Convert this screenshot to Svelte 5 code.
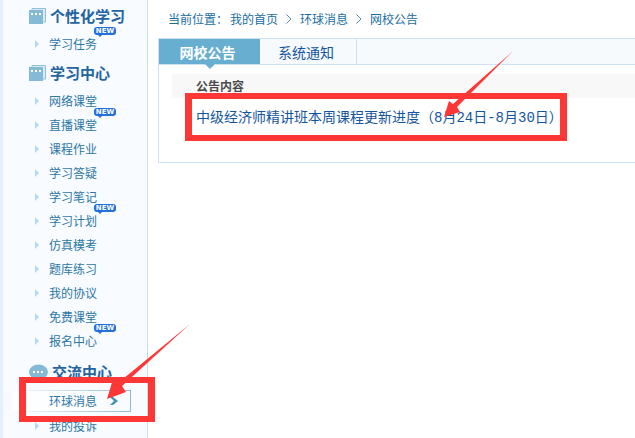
<script>
	const sections = [
		{
			title: '个性化学习',
			icon: 'book',
			items: [{ label: '学习任务', fresh: true }]
		},
		{
			title: '学习中心',
			icon: 'book',
			items: [
				{ label: '网络课堂' },
				{ label: '直播课堂', fresh: true },
				{ label: '课程作业' },
				{ label: '学习答疑' },
				{ label: '学习笔记' },
				{ label: '学习计划', fresh: true },
				{ label: '仿真模考' },
				{ label: '题库练习' },
				{ label: '我的协议' },
				{ label: '免费课堂' },
				{ label: '报名中心', fresh: true }
			]
		},
		{
			title: '交流中心',
			icon: 'chat',
			items: [{ label: '环球消息' }, { label: '我的投诉' }]
		}
	]

	const tabs = ['网校公告', '系统通知']

	let current = '环球消息'
	let active_tab = '网校公告'
</script>

<div class="page">
	<nav class="sidebar">
		{#each sections as section}
			<section class={section.icon}>
				<h2>
					{#if section.icon === 'book'}
						<svg width="17" height="17" viewBox="0 0 17 17">
							<path d="M3 .5h13.500v13.500H3z" fill="#d9ecf5" stroke="#8fc1d9" />
							<path d="M0 2h14v14H0z" fill="#84bad5" />
							<path d="M2 5h2v2H2zM6 5h2v2H6zM10 5h2v2h-2z" fill="#fff" />
						</svg>
					{:else}
						<svg width="19" height="17" viewBox="0 0 19 17">
							<ellipse cx="9.500" cy="8" rx="9.500" ry="7.500" fill="#84bad5" />
							<path d="M3 12l-1 4 5-2z" fill="#84bad5" />
							<path d="M4 7h2v2H4zM8 7h2v2H8zM12 7h2v2h-2z" fill="#fff" />
						</svg>
					{/if}
					{section.title}
				</h2>
				<ul>
					{#each section.items as item}
						<li class:current={item.label === current}>
							<a href="#top" on:click|preventDefault={() => current = item.label}>
								{item.label}
								{#if item.fresh}
									<span class="badge">NEW</span>
								{/if}
							</a>
							{#if item.label === current}
								<svg class="chevron" width="8" height="8" viewBox="0 0 8 8">
									<path d="M0 0h3l5 4-5 4H0l4-4z" fill="#3f93b8" />
								</svg>
							{/if}
						</li>
					{/each}
				</ul>
				{#if section.icon === 'chat'}
					<div class="mark mark-menu">
						<svg class="arrow" width="84" height="78" viewBox="0 0 84 78">
							<path d="M83 1L11 60 6 56 0 76l19-7-4-6z" fill="#fd3636" />
						</svg>
					</div>
				{/if}
			</section>
		{/each}
	</nav>

	<main>
		<div class="crumbs">
			<span>当前位置：</span>
			<a href="#top">我的首页</a>
			<svg width="6" height="10" viewBox="0 0 6 10"><path d="M.5.5L5 5 .5 9.500" /></svg>
			<a href="#top">环球消息</a>
			<svg width="6" height="10" viewBox="0 0 6 10"><path d="M.5.5L5 5 .5 9.500" /></svg>
			<a href="#top">网校公告</a>
		</div>

		<div class="panel">
			<div class="tabs">
				{#each tabs as tab}
					<button class:active={tab === active_tab} on:click={() => active_tab = tab}>{tab}</button>
				{/each}
			</div>
			<div class="notices">
				<h3>公告内容</h3>
				<div class="notice">
					<a href="#top">中级经济师精讲班本周课程更新进度（8月24日-8月30日）</a>
					<div class="mark mark-notice">
						<svg class="arrow" width="70" height="68" viewBox="0 0 70 68">
							<path d="M69 1L9 54 5 51 0 67l16-5-3-5z" fill="#fd3636" />
						</svg>
					</div>
				</div>
			</div>
		</div>
	</main>
</div>

<style>
	:global(body) {
		margin: 0;
		background: #fff;
		overflow: hidden;
	}

	.page {
		display: flex;
		font: 12px/24px "Noto Sans CJK SC", sans-serif;
		color: #2d77a3;
	}

	a {
		color: inherit;
		text-decoration: none;
	}

	.sidebar {
		flex: none;
		width: 144px;
		border-left: 3px solid #e2f1fe;
		border-right: 1px solid #c6dcec;
		background: #f8fbff;
	}

	section {
		position: relative;
	}

	section + section {
		padding-top: 1px;
	}

	section.chat {
		padding-top: 3px;
	}

	h2 {
		display: flex;
		align-items: center;
		gap: 4px;
		height: 32px;
		margin: 0;
		padding-left: 26px;
		font-size: 15px;
		font-weight: 700;
		color: #2464a0;
	}

	ul {
		margin: 0;
		padding: 0;
		list-style: none;
	}

	li {
		display: flex;
		align-items: center;
		height: 24px;
		padding-left: 32px;
	}

	li::before {
		content: '';
		border: 4px solid transparent;
		border-left-color: #b4d8f8;
		border-right: 0;
		margin-right: 10px;
	}

	li a {
		position: relative;
	}

	li.current {
		height: 20px;
		margin: 2px 16px 2px 9px;
		padding-left: 23px;
		border: 1px solid;
		border-image: linear-gradient(to right, #f8fbff, #8fbbd6) 1;
		background: linear-gradient(to right, #fff, #f8fbff);
	}

	li.current::before {
		visibility: hidden;
		margin-right: 9px;
	}

	.chevron {
		margin-left: 13px;
	}

	.badge {
		position: absolute;
		left: 45px;
		top: -5px;
		z-index: 1;
		width: 22px;
		height: 8px;
		border-radius: 3px;
		background: #236fdc;
		color: #fff;
		font: bold 7px/8px "DejaVu Sans", sans-serif;
		text-align: center;
	}

	.badge::after {
		content: '';
		position: absolute;
		left: 3px;
		top: 7px;
		border: 3px solid transparent;
		border-top-color: #236fdc;
		border-bottom: 0;
	}

	main {
		flex: 1;
		min-width: 0;
		padding: 7px 0 0 10px;
	}

	.crumbs {
		display: flex;
		align-items: center;
		gap: 8px;
		padding-left: 10px;
		color: #1a6da0;
	}

	.crumbs span {
		margin-right: -6px;
	}

	.crumbs path {
		fill: none;
		stroke: #4b8db5;
	}

	.panel {
		margin-top: 7px;
		border: 1px solid #cfe2f1;
		border-right: 0;
	}

	.tabs {
		display: flex;
		height: 25px;
		border-bottom: 1px solid #cfe2f1;
		background: #f7fafd;
	}

	.tabs button {
		position: relative;
		width: 97px;
		padding: 0 4px 0 0;
		border: 0;
		border-right: 1px solid #cfe2f1;
		background: none;
		color: #1455a0;
		font: 14px/24px "Noto Sans CJK SC", sans-serif;
	}

	.tabs .active {
		width: 101px;
		border: 0;
		background: #68aed0;
		color: #fff;
		font-weight: 700;
	}

	.tabs .active::after {
		content: '';
		position: absolute;
		left: 46px;
		top: 25px;
		border: 5px solid transparent;
		border-top-color: #68aed0;
		border-bottom: 0;
	}

	.notices {
		padding: 9px 0 22px 13px;
	}

	h3 {
		margin: 0;
		padding-left: 24px;
		background: #f8f8f8;
		color: #4c4c4c;
		font-size: 12px;
	}

	.notice {
		position: relative;
		padding: 8px 0 10px 24px;
		color: #1455a0;
		font: 14px/24px "Liberation Mono", "Noto Sans CJK SC", monospace;
		white-space: nowrap;
	}

	.mark {
		position: absolute;
		box-sizing: border-box;
		pointer-events: none;
		border: solid #fd3636;
		border-width: 6px 7px;
	}

	.mark-menu {
		left: 16px;
		top: 24px;
		width: 136px;
		height: 45px;
		z-index: 2;
	}

	.mark-notice {
		left: 13px;
		top: -5px;
		width: 382px;
		height: 48px;
	}

	.arrow {
		position: absolute;
	}

	.mark-menu .arrow {
		left: 81px;
		top: -60px;
	}

	.mark-notice .arrow {
		left: 252px;
		top: -49px;
	}
</style>
